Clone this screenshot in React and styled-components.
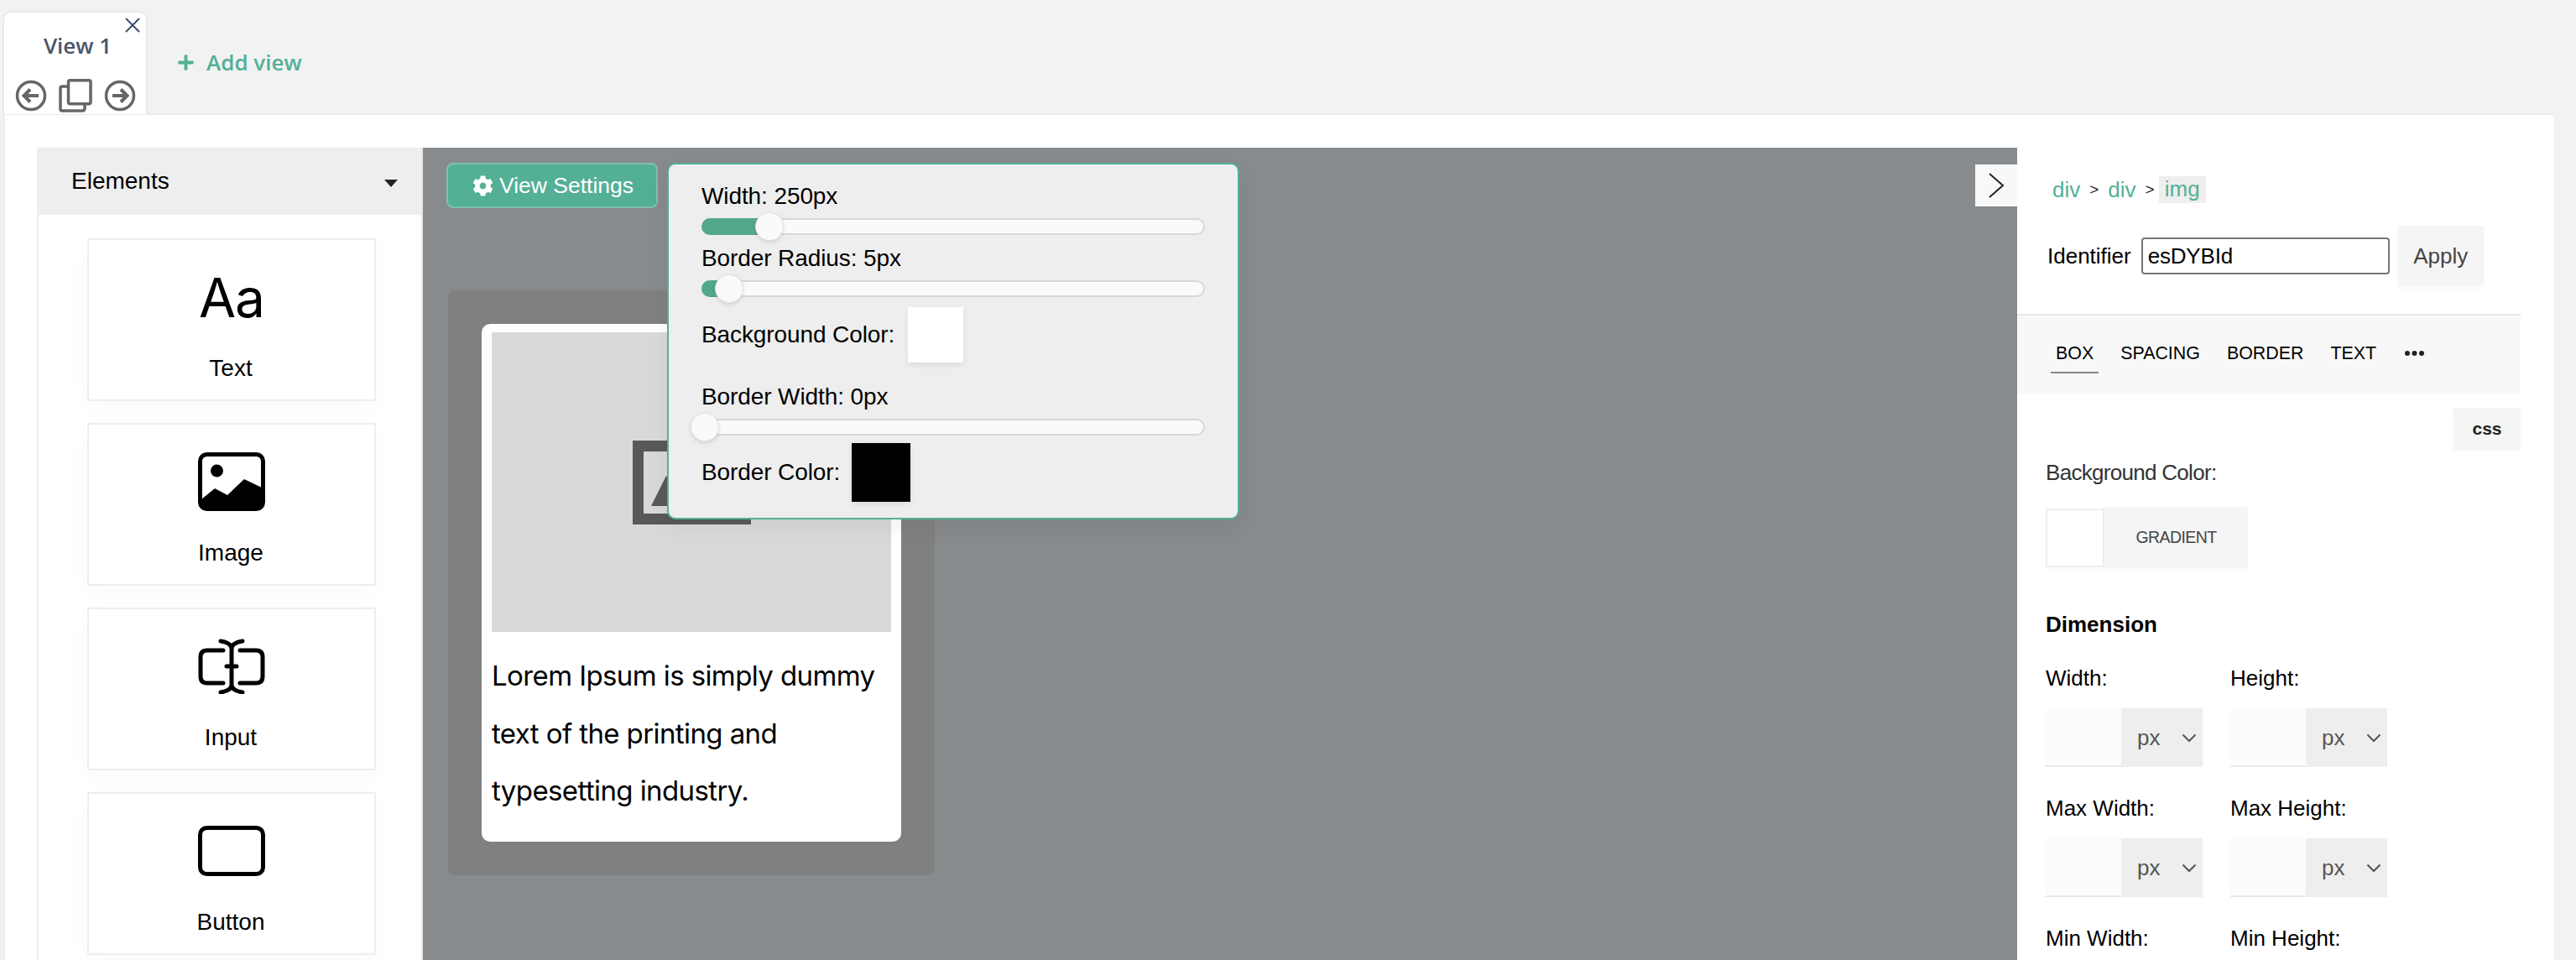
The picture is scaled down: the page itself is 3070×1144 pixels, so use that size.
import React from "react";
import styled, { createGlobalStyle } from "styled-components";
import { FaCog, FaPlus } from "react-icons/fa";

const Global = createGlobalStyle`
  html, body { margin: 0; padding: 0; background: #f2f2f2; }
  body { font-family: "Liberation Sans", Arial, sans-serif; color: #000; overflow: hidden; }
  * { box-sizing: border-box; }
`;

const Page = styled.div`
  width: 3070px;
  height: 1144px;
  overflow: hidden;
  display: flex;
  flex-direction: column;
`;
const TabBar = styled.div`
  height: 135px;
  padding: 13px 0 0 3px;
  display: flex;
  align-items: flex-start;
  flex: none;
`;
const ViewTab = styled.div`
  position: relative;
  width: 173px;
  height: 123px;
  background: #fff;
  border: 2px solid #e6e8ec;
  border-bottom: 0;
  border-radius: 10px 10px 0 0;
  display: flex;
  flex-direction: column;
  align-items: center;
`;
const TabTitle = styled.div`
  font-family: "Open Sans", sans-serif;
  font-weight: 600;
  font-size: 26px;
  line-height: 34px;
  color: #4a5568;
  margin: 22px 0 0 6px;
`;
const TabClose = styled.svg`
  position: absolute;
  top: 6px;
  right: 7px;
  width: 18px;
  height: 18px;
`;
const TabIcons = styled.div`
  display: flex;
  align-items: center;
  gap: 14px;
  margin-top: 23px;
`;
const AddView = styled.div`
  display: flex;
  align-items: center;
  gap: 14px;
  margin: 44px 0 0 35px;
  font-family: "Open Sans", sans-serif;
  font-weight: 600;
  font-size: 26px;
  line-height: 34px;
  color: #53b095;
`;
const Workspace = styled.div`
  margin-left: 4px;
  width: 3040px;
  flex: 1;
  min-height: 0;
  background: #fff;
  border-top: 2px solid #e8e8e8;
  border-left: 2px solid #eee;
  border-radius: 0 4px 0 0;
  padding: 39px 40px 0 38px;
  display: flex;
  overflow: hidden;
`;
const Sidebar = styled.aside`
  width: 460px;
  flex: none;
  border-left: 2px solid #eee;
  border-right: 2px solid #e8e8e8;
`;
const SidebarHead = styled.div`
  height: 80px;
  margin-left: -2px;
  background: #eee;
  display: flex;
  align-items: center;
  justify-content: space-between;
  padding: 0 28px 0 41px;
  font-size: 28px;
`;
const Caret = styled.span`
  width: 0;
  height: 0;
  border-left: 8px solid transparent;
  border-right: 8px solid transparent;
  border-top: 9px solid #222;
  margin-top: 4px;
`;
const ElementList = styled.div`
  display: flex;
  flex-direction: column;
  gap: 26px;
  padding: 28px 0 0 58px;
`;
const ElementCard = styled.div`
  width: 344px;
  height: 194px;
  flex: none;
  background: #fff;
  border: 2px solid #eee;
  box-shadow: 0 8px 30px rgba(0, 0, 0, 0.025);
  padding-top: 18px;
  display: flex;
  flex-direction: column;
  align-items: center;
`;
const IconSlot = styled.div`
  height: 100px;
  display: flex;
  align-items: center;
  justify-content: center;
`;
const AaGlyph = styled.span`
  font-family: Inter, sans-serif;
  font-size: 64px;
  line-height: 100px;
  letter-spacing: -1px;
  margin-top: 2px;
`;
const CardLabel = styled.div`
  margin: 20px 2px 0 0;
  font-size: 28px;
  line-height: 30px;
`;
const Canvas = styled.main`
  position: relative;
  width: 1900px;
  flex: none;
  background: #888b8d;
  padding: 18px 0 0 30px;
`;
const SettingsButton = styled.button`
  width: 252px;
  height: 54px;
  margin-left: -2px;
  background: #53b095;
  border: 2px solid #7fc0ac;
  border-radius: 8px;
  color: #fff;
  font-family: "Liberation Sans", sans-serif;
  font-size: 26.5px;
  display: flex;
  align-items: center;
  justify-content: center;
  gap: 7px;
  padding: 0 0 0 2px;
  svg { width: 25px; height: 25px; }
`;
const DropZone = styled.div`
  width: 580px;
  height: 697px;
  margin-top: 98px;
  background: #808080;
  border-radius: 8px;
  padding: 40px;
`;
const ContentCard = styled.div`
  width: 500px;
  height: 617px;
  background: #fff;
  border-radius: 10px;
  padding: 10px 12px;
`;
const Placeholder = styled.div`
  height: 357px;
  background: #d9d9d9;
  display: flex;
  align-items: center;
  justify-content: center;
`;
const CardText = styled.p`
  margin: 18px 0 0 0;
  font-family: Inter, sans-serif;
  font-size: 33px;
  line-height: 68.5px;
  letter-spacing: -0.6px;
  width: 470px;
`;
const SettingsPopup = styled.div`
  position: absolute;
  left: 291px;
  top: 18px;
  width: 682px;
  height: 425px;
  background: #eee;
  border: 2px solid #53b095;
  border-radius: 10px;
  padding: 22px 39px 0;
  box-shadow: 0 10px 30px rgba(0, 0, 0, 0.06);
  z-index: 2;
`;
const PopupLabel = styled.div`
  font-size: 28px;
  line-height: 32px;
  letter-spacing: -0.1px;
`;
const SliderBlock = styled.div`
  height: ${(p) => p.$height}px;
`;
const Track = styled.div`
  position: relative;
  margin-top: 10px;
  width: 600px;
  height: 20px;
  background: #fafafa;
  border: 2px solid #d8d8d8;
  border-radius: 10px;
`;
const Fill = styled.div`
  position: absolute;
  left: -2px;
  top: -2px;
  bottom: -2px;
  background: #53a78c;
  border-radius: 10px 0 0 10px;
`;
const Thumb = styled.div`
  position: absolute;
  top: -9px;
  width: 34px;
  height: 34px;
  margin-left: -17px;
  background: #fafafa;
  border: 1px solid #e2e2e2;
  border-radius: 50%;
  box-shadow: 0 2px 5px rgba(0, 0, 0, 0.12);
`;
const ColorRow = styled.div`
  display: flex;
  align-items: center;
  gap: ${(p) => p.$gap}px;
  margin-top: ${(p) => p.$top}px;
`;
const PopupSwatch = styled.div`
  width: ${(p) => p.$size}px;
  height: ${(p) => p.$size}px;
  background: ${(p) => p.$color};
  box-shadow: 0 3px 8px rgba(0, 0, 0, 0.08);
`;
const PanelToggle = styled.div`
  position: absolute;
  right: 0;
  top: 20px;
  width: 50px;
  height: 50px;
  background: #f8f8f8;
  display: flex;
  align-items: center;
  justify-content: center;
`;
const RightPanel = styled.aside`
  width: 600px;
  flex: none;
  background: #fff;
`;
const Breadcrumb = styled.div`
  display: flex;
  align-items: center;
  height: 32px;
  margin: 34px 0 0 42px;
  font-size: 26px;
  color: #53b095;
`;
const CrumbSep = styled.span`
  color: #222;
  font-size: 19px;
  margin: 0 11px;
`;
const CrumbActive = styled.span`
  background: #eee;
  height: 32px;
  line-height: 30px;
  padding: 0 7px;
  margin-left: -6px;
`;
const IdentifierRow = styled.div`
  display: flex;
  align-items: center;
  margin: 27px 0 0 36px;
  height: 72px;
  font-size: 26px;
`;
const IdentifierInput = styled.div`
  width: 296px;
  height: 44px;
  margin: 0 10px 0 12px;
  border: 2px solid #767676;
  border-radius: 4px;
  padding-left: 6px;
  line-height: 40px;
  letter-spacing: -0.2px;
`;
const GhostButton = styled.div`
  background: #f5f5f5;
  box-shadow: 0 6px 10px rgba(0, 0, 0, 0.02);
  color: #444;
  display: flex;
  align-items: center;
  justify-content: center;
`;
const ApplyButton = styled(GhostButton)`
  width: 102px;
  height: 72px;
  font-size: 26px;
`;
const StyleTabs = styled.div`
  margin-top: 33px;
  height: 95px;
  background: #f8f8f8;
  border-top: 2px solid #e8e8e8;
  display: flex;
  gap: 20px;
  padding: 30px 0 0 40px;
  align-items: flex-start;
`;
const StyleTab = styled.div`
  padding: 0 6px;
  height: 39px;
  font-size: 21.4px;
  line-height: 30px;
  border-bottom: 2px solid ${(p) => (p.$active ? "#888" : "transparent")};
`;
const Dots = styled.svg`
  width: 23px;
  height: 6px;
  margin: 12px 0 0 8px;
`;
const CssRow = styled.div`
  display: flex;
  justify-content: flex-end;
  margin-top: 17px;
`;
const CssButton = styled(GhostButton)`
  width: 80px;
  height: 50px;
  font-size: 21px;
  font-weight: 700;
  color: #222;
`;
const FieldLabel = styled.div`
  font-size: 26px;
  line-height: 30px;
  color: ${(p) => p.$color || "#000"};
`;
const BackgroundLabel = styled(FieldLabel)`
  margin: 12px 0 0 34px;
  letter-spacing: -0.7px;
`;
const BackgroundRow = styled.div`
  display: flex;
  align-items: center;
  height: 73px;
  margin: 26px 0 0 34px;
`;
const BackgroundSwatch = styled.div`
  width: 70px;
  height: 70px;
  background: #fff;
  border: 2px solid #eee;
  box-shadow: 0 6px 10px rgba(0, 0, 0, 0.02);
`;
const GradientButton = styled(GhostButton)`
  width: 171px;
  height: 73px;
  font-size: 19.5px;
  color: #444;
  letter-spacing: -0.6px;
`;
const SectionTitle = styled.div`
  margin: 52px 0 0 34px;
  font-size: 26px;
  font-weight: 700;
  line-height: 30px;
`;
const DimensionGrid = styled.div`
  display: grid;
  grid-template-columns: 220px 220px;
  row-gap: 34px;
  margin: 34px 0 0 34px;
`;
const DimensionField = styled.div``;
const UnitInput = styled.div`
  display: flex;
  width: 187px;
  height: 70px;
  margin-top: 21px;
`;
const NumberBox = styled.div`
  width: 90px;
  background: #fcfcfc;
  border-bottom: 2px solid #e8e8e8;
`;
const UnitSelect = styled.div`
  width: 97px;
  background: #eee;
  display: flex;
  align-items: center;
  justify-content: space-between;
  padding: 0 7px 0 19px;
  font-size: 26px;
  color: #555;
`;

const COLORS = { stroke: "#666" };

const ArrowCircle = ({ dir }) => (
  <svg width="38" height="38" viewBox="0 0 38 38" fill="none" stroke={COLORS.stroke}>
    <circle cx="19" cy="19" r="16.5" strokeWidth="3.5" />
    {dir === "left" ? (
      <path d="M28 19H11M18 11.5L10.5 19L18 26.5" strokeWidth="4" />
    ) : (
      <path d="M10 19H27M20 11.5L27.5 19L20 26.5" strokeWidth="4" />
    )}
  </svg>
);
const CopyIcon = () => (
  <svg width="40" height="40" viewBox="0 0 40 40" fill="none" stroke={COLORS.stroke} strokeWidth="3.5">
    <rect x="11.5" y="1.8" width="26.5" height="28" rx="2" />
    <path d="M11 9H4Q2 9 2 11V36Q2 38 4 38H28Q31 38 31 35V30" />
  </svg>
);
const ImageIcon = () => (
  <svg width="80" height="70" viewBox="0 0 80 70">
    <rect x="2.5" y="2.5" width="75" height="65" rx="8" fill="none" stroke="#000" strokeWidth="5" />
    <ellipse cx="22.5" cy="22" rx="7.5" ry="7.5" />
    <path d="M4 56L20 43L35 51L55 32L76 42V60Q76 66 70 66H10Q4 66 4 60Z" />
  </svg>
);
const InputIcon = () => (
  <svg width="80" height="66" viewBox="0 0 80 66" fill="none" stroke="#000" strokeWidth="5" strokeLinecap="round">
    <path d="M30 14H11Q3 14 3 22V45Q3 53 11 53H30" />
    <path d="M50 14H69Q77 14 77 22V45Q77 53 69 53H50" />
    <path d="M27 3Q40 5 40 12V55Q40 62 27 64M53 3Q40 5 40 12M53 64Q40 62 40 55M34 33H46" />
  </svg>
);
const ButtonIcon = () => (
  <svg width="80" height="60" viewBox="0 0 80 60" fill="none" stroke="#000" strokeWidth="5">
    <rect x="2.5" y="2.5" width="75" height="55" rx="8" />
  </svg>
);
const BrokenImage = () => (
  <svg width="141" height="100" viewBox="0 0 141 100">
    <rect x="6.5" y="6.5" width="128" height="87" fill="#d9d9d9" stroke="#595959" strokeWidth="13" />
    <path d="M22 78L40 42L62 66L82 48L120 78Z" fill="#595959" />
  </svg>
);
const Chevron = () => (
  <svg width="18" height="11" viewBox="0 0 18 11" fill="none" stroke="#555" strokeWidth="2">
    <path d="M1.5 1.5L9 9L16.5 1.5" />
  </svg>
);

const Slider = ({ label, value, height }) => (
  <SliderBlock $height={height}>
    <PopupLabel>{label}</PopupLabel>
    <Track>
      {value > 2 && <Fill style={{ width: value }} />}
      <Thumb style={{ left: value }} />
    </Track>
  </SliderBlock>
);

const elements = [
  { name: "Text", icon: <AaGlyph>Aa</AaGlyph> },
  { name: "Image", icon: <ImageIcon /> },
  { name: "Input", icon: <InputIcon /> },
  { name: "Button", icon: <ButtonIcon /> },
];
const dimensions = ["Width:", "Height:", "Max Width:", "Max Height:", "Min Width:", "Min Height:"];

export default function App() {
  return (
    <Page>
      <Global />
      <TabBar>
        <ViewTab>
          <TabClose viewBox="0 0 18 18" fill="none" stroke="#3f4f72" strokeWidth="2">
            <path d="M1 1L17 17M17 1L1 17" />
          </TabClose>
          <TabTitle>View 1</TabTitle>
          <TabIcons>
            <ArrowCircle dir="left" />
            <CopyIcon />
            <ArrowCircle dir="right" />
          </TabIcons>
        </ViewTab>
        <AddView>
          <FaPlus size={21} />
          Add view
        </AddView>
      </TabBar>
      <Workspace>
        <Sidebar>
          <SidebarHead>
            Elements
            <Caret />
          </SidebarHead>
          <ElementList>
            {elements.map((e) => (
              <ElementCard key={e.name}>
                <IconSlot>{e.icon}</IconSlot>
                <CardLabel>{e.name}</CardLabel>
              </ElementCard>
            ))}
          </ElementList>
        </Sidebar>
        <Canvas>
          <SettingsButton>
            <FaCog />
            View Settings
          </SettingsButton>
          <DropZone>
            <ContentCard>
              <Placeholder>
                <BrokenImage />
              </Placeholder>
              <CardText>Lorem Ipsum is simply dummy text of the printing and typesetting industry.</CardText>
            </ContentCard>
          </DropZone>
          <SettingsPopup>
            <Slider label="Width: 250px" value={79} height={74} />
            <Slider label="Border Radius: 5px" value={31} height={62} />
            <ColorRow $gap={16} $top={12}>
              <PopupLabel>Background Color:</PopupLabel>
              <PopupSwatch $size={66} $color="#fff" />
            </ColorRow>
            <SliderBlock $height={71} style={{ marginTop: 25 }}>
              <PopupLabel>Border Width: 0px</PopupLabel>
              <Track>
                <Thumb style={{ left: 2 }} />
              </Track>
            </SliderBlock>
            <ColorRow $gap={14} $top={0}>
              <PopupLabel>Border Color:</PopupLabel>
              <PopupSwatch $size={70} $color="#000" />
            </ColorRow>
          </SettingsPopup>
          <PanelToggle>
            <svg width="20" height="30" viewBox="0 0 20 30" fill="none" stroke="#222" strokeWidth="2">
              <path d="M2 1L18 15L2 29" />
            </svg>
          </PanelToggle>
        </Canvas>
        <RightPanel>
          <Breadcrumb>
            div<CrumbSep>&gt;</CrumbSep>div<CrumbSep>&gt;</CrumbSep>
            <CrumbActive>img</CrumbActive>
          </Breadcrumb>
          <IdentifierRow>
            Identifier
            <IdentifierInput>esDYBId</IdentifierInput>
            <ApplyButton>Apply</ApplyButton>
          </IdentifierRow>
          <StyleTabs>
            <StyleTab $active>BOX</StyleTab>
            <StyleTab>SPACING</StyleTab>
            <StyleTab>BORDER</StyleTab>
            <StyleTab>TEXT</StyleTab>
            <Dots viewBox="0 0 23 6" fill="#222">
              <circle cx="3" cy="3" r="3" />
              <circle cx="11.5" cy="3" r="3" />
              <circle cx="20" cy="3" r="3" />
            </Dots>
          </StyleTabs>
          <CssRow>
            <CssButton>css</CssButton>
          </CssRow>
          <BackgroundLabel $color="#333">Background Color:</BackgroundLabel>
          <BackgroundRow>
            <BackgroundSwatch />
            <GradientButton>GRADIENT</GradientButton>
          </BackgroundRow>
          <SectionTitle>Dimension</SectionTitle>
          <DimensionGrid>
            {dimensions.map((d) => (
              <DimensionField key={d}>
                <FieldLabel>{d}</FieldLabel>
                <UnitInput>
                  <NumberBox />
                  <UnitSelect>
                    px
                    <Chevron />
                  </UnitSelect>
                </UnitInput>
              </DimensionField>
            ))}
          </DimensionGrid>
        </RightPanel>
      </Workspace>
    </Page>
  );
}
